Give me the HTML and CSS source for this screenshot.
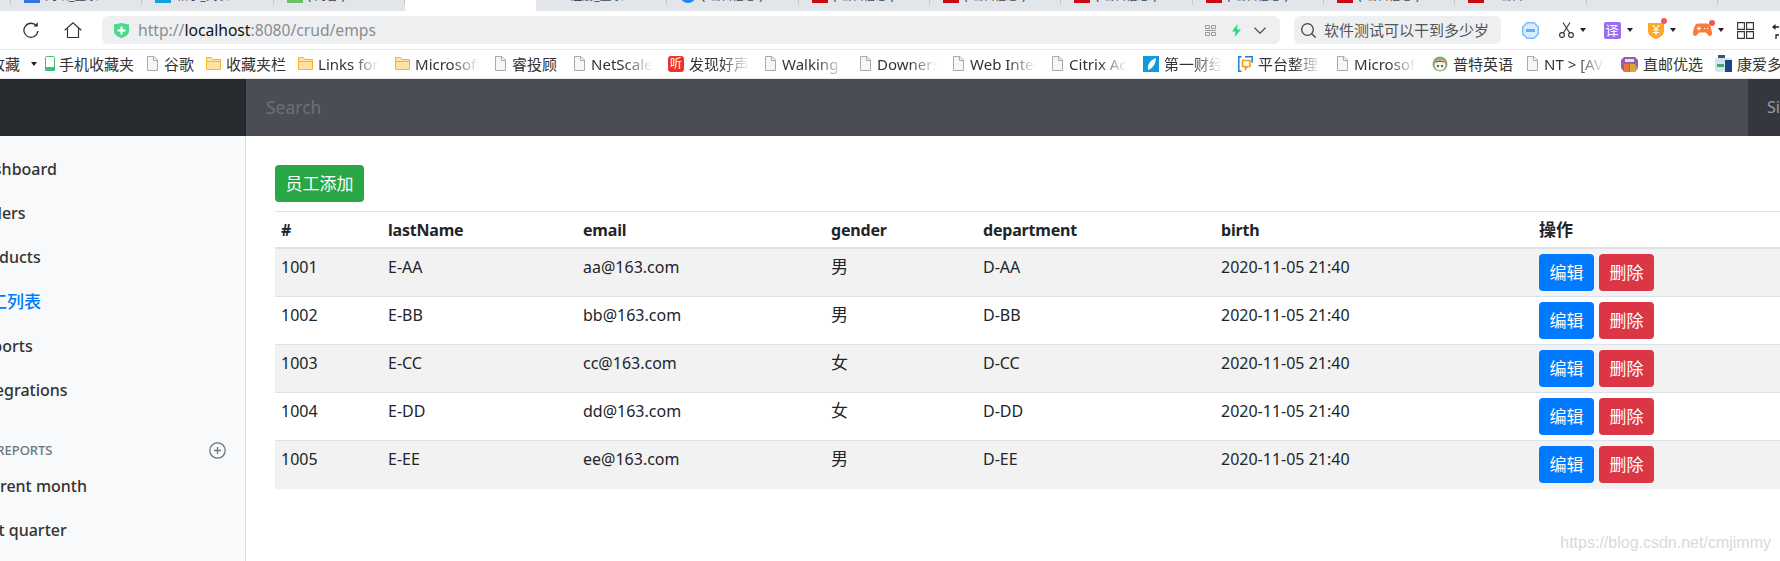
FILE: index.html
```html
<!DOCTYPE html>
<html lang="en">

<head>
    <meta charset="UTF-8">
    <meta name="viewport" content="width=device-width, initial-scale=1.0">
    <title>员工列表</title>
    <link rel="stylesheet" href="styles.css">
</head>

<body>
    <!-- shared icons -->
    <svg class="defs">
        <symbol id="file" viewBox="0 0 11 15">
            <path d="M.5.5h6.5l3.5 3.5v10.500h-10z" fill="#f6f6f6" stroke="#a9a9a9" />
            <path d="M6.500.5v4h4" fill="none" stroke="#a9a9a9" />
        </symbol>
        <symbol id="folder" viewBox="0 0 15 13">
            <path d="M.5 12.500v-12h5l1.500 2h7.500v10z" fill="#ffe1a3" stroke="#fdb02c" />
            <path d="M.5 4.500h14" fill="none" stroke="#fdb02c" />
        </symbol>
        <symbol id="caret" viewBox="0 0 6 4">
            <path d="M0 0h6l-3 4z" fill="#222" />
        </symbol>
    </svg>

    <!-- browser tabs, only the bottom edge is on screen -->
    <div class="tabstrip">
        <div class="tab tab-first"></div>
        <div class="tab"><span class="favicon fav-blue"></span><span>网站_登录</span></div>
        <div class="tab"><span class="favicon fav-cyan"></span><span>帖子_列表</span></div>
        <div class="tab"><span class="favicon fav-green"></span><span>( 问答 )</span></div>
        <div class="tab tab-active"></div>
        <div class="tab"><span class="favicon fav-none"></span><span>注册_登录</span></div>
        <div class="tab"><span class="favicon fav-round"></span><span>( 编辑信息 )</span></div>
        <div class="tab"><span class="favicon fav-red"></span><span>( 编辑信息 )</span></div>
        <div class="tab"><span class="favicon fav-red"></span><span>( 编辑信息 )</span></div>
        <div class="tab"><span class="favicon fav-red"></span><span>( 编辑信息 )</span></div>
        <div class="tab"><span class="favicon fav-red"></span><span>( 编辑信息 )</span></div>
        <div class="tab"><span class="favicon fav-red"></span><span>( 编辑信息 )</span></div>
        <div class="tab"><span class="favicon fav-red"></span><span>&nbsp;&nbsp;&nbsp;编辑</span></div>
        <div class="tab"></div>
    </div>

    <!-- browser toolbar -->
    <div class="toolbar">
        <svg class="tool-reload" width="16" height="16" viewBox="0 0 16 16" fill="none" stroke="#333" stroke-width="1.300">
            <path d="M13.500 4a7 7 0 1 0 1.400 5" />
            <path d="M10.500 4.500h4.300v-4.300z" fill="#333" stroke="none" />
        </svg>
        <svg class="tool-home" width="18" height="16" viewBox="0 0 18 16" fill="none" stroke="#333" stroke-width="1.200">
            <path d="M.7 8.300 9 .8l8.300 7.500M3.500 6.500v9h11v-9" />
        </svg>
        <div class="addressbar">
            <svg width="15" height="15" viewBox="0 0 15 15">
                <path d="M0 1.500 7.500 0 15 1.500v6.500c0 3.500-3.500 5.800-7.500 7C3.500 13.800 0 11.500 0 8z" fill="#4bd98b" />
                <path d="M6.500 3.500h2v3h3v2h-3v3h-2v-3h-3v-2h3z" fill="#fff" />
            </svg>
            <span class="url">http://<b>localhost</b>:8080/crud/emps</span>
            <svg class="qr" width="11" height="11" viewBox="0 0 11 11" fill="none" stroke="#9a9a9a">
                <path d="M.5.500h4v3h-4zM6.500.500h4v3h-4zM.5 7.500h4v3h-4zM6.500 7.500h4v3h-4zM0 5.500h11" />
            </svg>
            <svg class="bolt" width="9" height="13" viewBox="0 0 9 13">
                <path d="M5.500 0 0 7.500h3.500L2.500 13 9 5.500H5z" fill="#2fd67c" />
            </svg>
            <svg class="chevron" width="12" height="7" viewBox="0 0 12 7" fill="none" stroke="#555" stroke-width="1.300">
                <path d="m.5.700 5.500 5.500L11.500.7" />
            </svg>
        </div>
        <div class="searchbar">
            <svg width="15" height="15" viewBox="0 0 15 15" fill="none" stroke="#444" stroke-width="1.300">
                <circle cx="6.500" cy="6.500" r="5.800" />
                <path d="m10.800 10.800 3.800 3.800" />
            </svg>
            <span>软件测试可以干到多少岁</span>
        </div>
        <div class="ext ext-hex">
            <svg width="17" height="17" viewBox="0 0 17 17">
                <path d="M5 .7h7L16.300 5v7L12 16.300H5L.7 12V5z" fill="#d8ebff" stroke="#79bbff" stroke-width="1.400" />
                <rect x="4" y="7" width="9" height="3" fill="#64aef8" />
            </svg>
        </div>
        <div class="ext">
            <svg width="15" height="16" viewBox="0 0 15 16" fill="none" stroke="#333" stroke-width="1.100">
                <circle cx="3" cy="13" r="2.400" />
                <circle cx="12" cy="13" r="2.400" />
                <path d="M4.300 11 11 .5M10.700 11 4 .5" />
            </svg>
            <svg class="caret"><use href="#caret" /></svg>
        </div>
        <div class="ext">
            <span class="ext-translate">译</span>
            <svg class="caret"><use href="#caret" /></svg>
        </div>
        <div class="ext">
            <span class="ext-badge ext-yuan">
                <svg width="16" height="18" viewBox="0 0 16 18">
                    <path d="M0 2h16v8c0 4-4 6.500-8 8-4-1.500-8-4-8-8z" fill="#ffa82b" />
                    <path d="M4.800 4 8 8l3.200-4M8 8v6M5 9h6M5 11.500h6" fill="none" stroke="#fff" stroke-width="1.100" />
                </svg>
            </span>
            <svg class="caret"><use href="#caret" /></svg>
        </div>
        <div class="ext">
            <span class="ext-badge ext-game">
                <svg width="19" height="14" viewBox="0 0 19 14">
                    <path d="M5 .5h9c3 0 4.500 5 5 9.500.3 3-2.500 4-4 2l-2-2.500H6L4 12c-1.500 2-4.300 1-4-2C.5 5.500 2 .5 5 .5z" fill="#fb7a35" />
                    <path d="M4 5.500h4M6 3.500v4M11 5.500h1.200M14 5.500h1.200" fill="none" stroke="#fff" stroke-width="1.200" />
                </svg>
            </span>
            <svg class="caret"><use href="#caret" /></svg>
        </div>
        <div class="ext ext-grid">
            <svg width="17" height="17" viewBox="0 0 17 17" fill="none" stroke="#333" stroke-width="1.100">
                <path d="M.6.600h6.800v6.800H.6zM9.600.600h6.800v6.800H9.600zM.6 9.600h6.800v6.800H.6zM9.600 9.600h6.800v6.800H9.600z" />
            </svg>
        </div>
        <svg width="7" height="17" viewBox="0 0 7 17" fill="none" stroke="#222" stroke-width="1.300">
            <path d="M1 5h6M7 13H4v4" />
            <path d="M3.500 2 0 5l3.500 3z" fill="#222" stroke="none" />
        </svg>
    </div>

    <!-- bookmarks -->
    <div class="bookmarks">
        <span class="bm-cut">收藏</span>
        <svg class="caret bm-caret"><use href="#caret" /></svg>
        <div class="bm bm-phone">
            <svg width="10" height="15" viewBox="0 0 10 15">
                <rect x=".5" y=".5" width="9" height="14" rx="1.200" fill="#fff" stroke="#3ec07c" />
                <rect x="0" y="11" width="10" height="4" rx="1" fill="#3ec07c" />
            </svg>
            <span>手机收藏夹</span>
        </div>
        <div class="bm"><svg class="ic-file"><use href="#file" /></svg><span>谷歌</span></div>
        <div class="bm"><svg class="ic-folder"><use href="#folder" /></svg><span>收藏夹栏</span></div>
        <div class="bm"><svg class="ic-folder"><use href="#folder" /></svg><span class="fade w65">Links for</span></div>
        <div class="bm"><svg class="ic-folder"><use href="#folder" /></svg><span class="fade w68">Microsoft</span></div>
        <div class="bm"><svg class="ic-file"><use href="#file" /></svg><span class="w50">睿投顾</span></div>
        <div class="bm"><svg class="ic-file"><use href="#file" /></svg><span class="fade w65">NetScaler</span></div>
        <div class="bm">
            <span class="ic-ting">听</span>
            <span class="fade w64">发现好声音</span>
        </div>
        <div class="bm"><svg class="ic-file"><use href="#file" /></svg><span class="fade w66">Walking</span></div>
        <div class="bm"><svg class="ic-file"><use href="#file" /></svg><span class="fade w64">Downers</span></div>
        <div class="bm"><svg class="ic-file"><use href="#file" /></svg><span class="fade w70">Web Interface</span></div>
        <div class="bm"><svg class="ic-file"><use href="#file" /></svg><span class="fade w62">Citrix Access</span></div>
        <div class="bm">
            <svg width="16" height="16" viewBox="0 0 16 16">
                <rect width="16" height="16" fill="#129bdc" />
                <path d="M5 14c-1-5 2-10 8-12-.5 6-3 10-8 12z" fill="#fff" />
            </svg>
            <span class="fade w62">第一财经</span>
        </div>
        <div class="bm">
            <svg width="15" height="16" viewBox="0 0 15 16">
                <path d="M3.500.8H.8v14.400h2.700M7 .8h7.200v6" fill="none" stroke="#1b7fd0" stroke-width="1.500" />
                <path d="M4.500 4.500h7.500v6H9.500l-2 2.500v-2.500h-3z" fill="none" stroke="#f59a23" stroke-width="1.600" />
            </svg>
            <span class="fade w67">平台整理</span>
        </div>
        <div class="bm"><svg class="ic-file"><use href="#file" /></svg><span class="fade w66">Microsoft</span></div>
        <div class="bm">
            <svg width="16" height="16" viewBox="0 0 16 16">
                <circle cx="8" cy="8" r="7.500" fill="#7fae6a" />
                <circle cx="8" cy="9" r="5.500" fill="#f2f2f2" />
                <path d="M2.500 7c2-3.500 8-4 11 0-3-1.500-8-1.500-11 0z" fill="#d9473c" />
                <circle cx="6" cy="10" r="1" fill="#333" />
                <circle cx="10" cy="10" r="1" fill="#333" />
            </svg>
            <span class="w62">普特英语</span>
        </div>
        <div class="bm"><svg class="ic-file"><use href="#file" /></svg><span class="fade w65">NT &gt; [AVM</span></div>
        <div class="bm">
            <svg width="17" height="17" viewBox="0 0 17 17">
                <path d="M3 2h11l3 3v8l-3 4H3l-3-4V5z" fill="#9a5fa8" />
                <path d="M3 9h5v8H3z" fill="#e8743b" />
                <path d="M9 9h5l2 4-2 4H9z" fill="#d7a53a" />
                <path d="M4 4h9v3H4z" fill="#f0d8f0" />
            </svg>
            <span>直邮优选</span>
        </div>
        <div class="bm">
            <svg width="17" height="17" viewBox="0 0 17 17">
                <path d="M3 0h7v3H3z" fill="#33538f" />
                <rect x="0" y="3" width="17" height="14" rx="2" fill="#d6e4ec" />
                <path d="M10 5h7v12h-7z" fill="#1d4388" />
                <path d="M2 9h7v3H2z" fill="#45a86a" />
            </svg>
            <span>康爱多</span>
        </div>
    </div>

    <!-- page -->
    <nav class="navbar">
        <div class="brand"></div>
        <div class="nav-search">Search</div>
        <div class="nav-signout">Sign out</div>
    </nav>

    <div class="page">
        <aside class="sidebar">
            <ul class="side-list">
                <li>Dashboard</li>
                <li>Orders</li>
                <li>Products</li>
                <li class="active">员工列表</li>
                <li>Reports</li>
                <li>Integrations</li>
            </ul>
            <h6 class="side-heading">
                <span>Saved reports</span>
                <svg width="17" height="17" viewBox="0 0 17 17" fill="none" stroke="#6c757d" stroke-width="1.300">
                    <circle cx="8.500" cy="8.500" r="7.700" />
                    <path d="M8.500 5v7M5 8.500h7" />
                </svg>
            </h6>
            <ul class="side-list">
                <li>Current month</li>
                <li>Last quarter</li>
            </ul>
        </aside>

        <main class="content">
            <a class="btn btn-add">员工添加</a>
            <table class="emp-table">
                <thead>
                    <tr>
                        <th class="col-id">#</th>
                        <th class="col-name">lastName</th>
                        <th class="col-email">email</th>
                        <th class="col-gender">gender</th>
                        <th class="col-dept">department</th>
                        <th class="col-birth">birth</th>
                        <th class="cjk">操作</th>
                    </tr>
                </thead>
                <tbody>
                    <tr>
                        <td>1001</td>
                        <td>E-AA</td>
                        <td>aa@163.com</td>
                        <td class="cjk">男</td>
                        <td>D-AA</td>
                        <td>2020-11-05 21:40</td>
                        <td><a class="btn btn-sm btn-edit">编辑</a><a class="btn btn-sm btn-del">删除</a></td>
                    </tr>
                    <tr>
                        <td>1002</td>
                        <td>E-BB</td>
                        <td>bb@163.com</td>
                        <td class="cjk">男</td>
                        <td>D-BB</td>
                        <td>2020-11-05 21:40</td>
                        <td><a class="btn btn-sm btn-edit">编辑</a><a class="btn btn-sm btn-del">删除</a></td>
                    </tr>
                    <tr>
                        <td>1003</td>
                        <td>E-CC</td>
                        <td>cc@163.com</td>
                        <td class="cjk">女</td>
                        <td>D-CC</td>
                        <td>2020-11-05 21:40</td>
                        <td><a class="btn btn-sm btn-edit">编辑</a><a class="btn btn-sm btn-del">删除</a></td>
                    </tr>
                    <tr>
                        <td>1004</td>
                        <td>E-DD</td>
                        <td>dd@163.com</td>
                        <td class="cjk">女</td>
                        <td>D-DD</td>
                        <td>2020-11-05 21:40</td>
                        <td><a class="btn btn-sm btn-edit">编辑</a><a class="btn btn-sm btn-del">删除</a></td>
                    </tr>
                    <tr>
                        <td>1005</td>
                        <td>E-EE</td>
                        <td>ee@163.com</td>
                        <td class="cjk">男</td>
                        <td>D-EE</td>
                        <td>2020-11-05 21:40</td>
                        <td><a class="btn btn-sm btn-edit">编辑</a><a class="btn btn-sm btn-del">删除</a></td>
                    </tr>
                </tbody>
            </table>
        </main>
    </div>

    <div class="watermark">https://blog.csdn.net/cmjimmy</div>
</body>

</html>
```

FILE: styles.css
```css
* {
    box-sizing: border-box;
}

html,
body {
    margin: 0;
    height: 561px;
    overflow: hidden;
}

body {
    position: relative;
    font-family: "Noto Sans", "Noto Sans CJK SC", sans-serif;
    font-size: 16px;
    line-height: 24px;
    color: #212529;
    background-color: #fff;
}

svg {
    display: block;
    flex: none;
}

.defs {
    display: none;
}

/* browser tabs */
.tabstrip {
    display: flex;
    height: 11px;
    background-color: #e2e5ea;
    overflow: hidden;
}

.tab {
    flex: 0 0 131.3px;
    display: flex;
    align-items: flex-end;
    gap: 5px;
    height: 5px;
    padding: 0 0 2px 13px;
    border-right: 1px solid #c4c7cc;
    font-size: 12px;
    line-height: 14px;
    color: #445;
    white-space: nowrap;
}

.tab-first {
    flex-basis: 11px;
    padding: 0;
}

.tab-active {
    height: 11px;
    background-color: #fff;
    border-right: none;
}

.favicon {
    flex: none;
    width: 16px;
    height: 16px;
}

.fav-blue {
    background-color: #2f78e0;
}

.fav-cyan {
    background-color: #14a0d8;
}

.fav-green {
    background-color: #6cc06a;
}

.fav-none {
    background-color: transparent;
}

.fav-round {
    background-color: #1e88f0;
    border-radius: 50%;
}

.fav-red {
    background-color: #c80a14;
}

/* browser toolbar */
.toolbar {
    display: flex;
    align-items: center;
    height: 39px;
    padding-left: 23px;
    border-bottom: 1px solid #e8e8e8;
    background-color: #fff;
}

.tool-reload {
    margin-right: 25px;
}

.tool-home {
    margin-right: 20px;
}

.addressbar {
    flex: none;
    display: flex;
    align-items: center;
    width: 1178px;
    height: 28px;
    padding: 0 14px 0 12px;
    border-radius: 6px;
    background-color: #eeeff1;
}

.url {
    margin-left: 9px;
    font-size: 15.650px;
    color: #8a8d92;
}

.url b {
    font-weight: 400;
    color: #111;
}

.qr {
    margin-left: auto;
}

.bolt {
    margin-left: 16px;
}

.chevron {
    margin-left: 13px;
}

.searchbar {
    flex: none;
    display: flex;
    align-items: center;
    gap: 8px;
    width: 207px;
    height: 28px;
    margin: 0 21px 0 14px;
    padding-left: 7px;
    border-radius: 6px;
    background-color: #eeeff1;
    font-size: 15px;
    color: #555;
    white-space: nowrap;
}

.ext {
    flex: none;
    display: flex;
    align-items: center;
    gap: 6px;
    width: 44.500px;
}

.ext-hex {
    width: 37px;
}

.ext-grid {
    width: 35px;
}

.caret {
    width: 6px;
    height: 4px;
}

.ext-translate {
    width: 17px;
    height: 17px;
    border-radius: 2px;
    background-color: #9b6df0;
    color: #fff;
    font-size: 13px;
    line-height: 17px;
    text-align: center;
}

.ext-badge {
    position: relative;
}

.ext-badge::after {
    content: "";
    position: absolute;
    top: -3px;
    right: -3px;
    width: 6px;
    height: 6px;
    border-radius: 50%;
    background-color: #f0575a;
}

/* bookmarks */
.bookmarks {
    display: flex;
    align-items: center;
    gap: 12px;
    height: 29px;
    padding-bottom: 1px;
    border-bottom: 1px solid #e8e8e8;
    background-color: #fff;
    font-size: 15px;
    color: #333;
    white-space: nowrap;
    overflow: hidden;
}

.bm-cut {
    flex: none;
    margin-left: -10px;
}

.bm-caret {
    margin-left: -1px;
    margin-right: -4px;
}

.bm {
    flex: none;
    display: flex;
    align-items: center;
    gap: 5px;
}

.bm-phone {
    gap: 4px;
}

.bm-phone span {
    width: 76px;
}

.ic-file {
    width: 11px;
    height: 15px;
    margin-right: 1px;
}

.ic-folder {
    width: 15px;
    height: 13px;
}

.ic-ting {
    width: 16px;
    height: 16px;
    border-radius: 3px;
    background-color: #ee3424;
    color: #fff;
    font-size: 12px;
    line-height: 16px;
    text-align: center;
}

.fade {
    overflow: hidden;
    -webkit-mask-image: linear-gradient(to right, #000 calc(100% - 32px), transparent calc(100% - 4px));
    mask-image: linear-gradient(to right, #000 calc(100% - 32px), transparent calc(100% - 4px));
}

.w50 {
    width: 50px;
}

.w62 {
    width: 62px;
}

.w64 {
    width: 64px;
}

.w65 {
    width: 65px;
}

.w66 {
    width: 66px;
}

.w67 {
    width: 67px;
}

.w68 {
    width: 68px;
}

.w70 {
    width: 70px;
}

/* dashboard nav */
.navbar {
    display: flex;
    height: 57px;
    background-color: #4a4d55;
}

.brand {
    flex: none;
    width: 246px;
    border-right: 1px solid #1e2125;
    background-color: #272b2f;
}

.nav-search {
    flex: 1;
    padding: 16px 20px;
    font-size: 17.500px;
    color: #6d7077;
}

.nav-signout {
    flex: none;
    width: 32px;
    padding: 16px 0 0 19px;
    background-color: #34373d;
    color: #9a9da2;
    white-space: nowrap;
}

/* dashboard body */
.page {
    display: flex;
    height: 425px;
}

.sidebar {
    flex: none;
    width: 246px;
    padding-top: 11px;
    border-right: 1px solid #dcdee0;
    background-color: #f8f9fa;
    overflow: hidden;
}

.side-list {
    margin: 0 0 0 -27px;
    padding: 0;
    list-style: none;
}

.side-list li {
    padding: 10.100px 0;
    font-weight: 500;
    color: #333;
    white-space: nowrap;
}

.side-list li.active {
    font-size: 17px;
    color: #007bff;
}

.side-heading {
    display: flex;
    justify-content: space-between;
    align-items: center;
    height: 20px;
    margin: 28px 0 4px -47px;
    padding-right: 19px;
    font-size: 13px;
    font-weight: 500;
    line-height: 20px;
    text-transform: uppercase;
    color: #6c757d;
    white-space: nowrap;
}

.content {
    flex: 1;
    min-width: 0;
    padding: 29px 0 0 29px;
}

.btn {
    display: inline-block;
    padding: 6px 0;
    border: 1px solid transparent;
    border-radius: 4px;
    font-size: 17px;
    text-align: center;
    color: #fff;
    white-space: nowrap;
}

.btn-add {
    display: block;
    width: 89px;
    height: 37px;
    margin-bottom: 9px;
    background-color: #28a745;
}

.btn-sm {
    width: 55px;
    height: 37px;
    margin-top: -1px;
}

.btn-edit {
    margin-right: 5px;
    background-color: #007bff;
}

.btn-del {
    background-color: #dc3545;
}

.emp-table {
    width: 100%;
    table-layout: fixed;
    border-collapse: collapse;
}

.emp-table th {
    height: 36px;
    padding: 6px 7px 4px;
    border-top: 1px solid #dee2e6;
    border-bottom: 2px solid #dee2e6;
    font-weight: 700;
    letter-spacing: -0.2px;
    text-align: left;
}

.emp-table td {
    height: 48px;
    padding: 6px 7px 4px;
    border-top: 1px solid #dee2e6;
    vertical-align: top;
}

.emp-table th:first-child,
.emp-table td:first-child {
    padding-left: 6px;
}

.emp-table .cjk {
    font-size: 17px;
    letter-spacing: 0;
}

.emp-table tbody tr:first-child td {
    height: 49px;
    border-top: none;
}

.emp-table tbody tr:nth-child(odd) {
    background-color: #f2f2f2;
}

.col-id {
    width: 106px;
}

.col-name {
    width: 195px;
}

.col-email {
    width: 248px;
}

.col-gender {
    width: 152px;
}

.col-dept {
    width: 238px;
}

.col-birth {
    width: 318px;
}

.watermark {
    position: absolute;
    right: 9px;
    bottom: 6px;
    font-family: "Liberation Sans", sans-serif;
    font-size: 16px;
    color: #d9d9d9;
}
```
